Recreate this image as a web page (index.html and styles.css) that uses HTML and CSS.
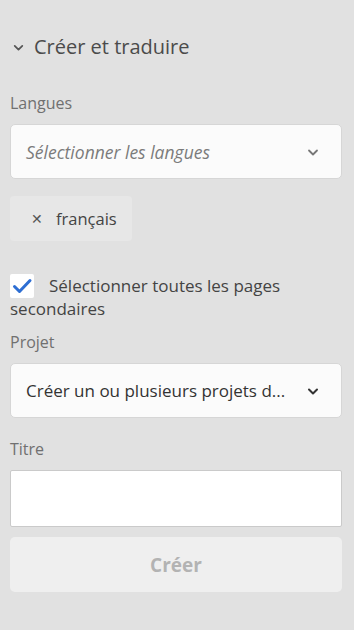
FILE: index.html
```html
<!DOCTYPE html>
<html lang="fr">

<head>
    <meta charset="UTF-8">
    <meta name="viewport" content="width=device-width, initial-scale=1.0">
    <title>Créer et traduire</title>
    <link rel="stylesheet" href="styles.css">
</head>

<body>
    <section class="panel">
        <h2 class="heading">
            <svg class="heading-icon" width="13" height="13" viewBox="0 0 12 12">
                <path d="M2.5 4.5 L6 8 L9.5 4.5" fill="none" stroke="#555" stroke-width="1.6" stroke-linecap="round" stroke-linejoin="round" />
            </svg>
            Créer et traduire
        </h2>

        <label class="label label-first">Langues</label>
        <div class="select">
            <span class="placeholder">Sélectionner les langues</span>
            <svg class="chevron" width="12" height="12" viewBox="0 0 12 12">
                <path d="M2 4.5 L6 8.5 L10 4.5" fill="none" stroke="#777" stroke-width="1.8" stroke-linecap="round" stroke-linejoin="round" />
            </svg>
        </div>

        <div class="tags">
            <span class="tag"><span class="tag-x">✕</span>français</span>
        </div>

        <div class="check">
            <span class="checkbox">
                <svg width="24" height="24" viewBox="0 0 24 24">
                    <path d="M4.5 12.5 L9.5 17.5 L20 6.5" fill="none" stroke="#2d6ed3" stroke-width="3" stroke-linecap="round" stroke-linejoin="round" />
                </svg>
            </span>Sélectionner toutes les pages secondaires
        </div>

        <label class="label label-project">Projet</label>
        <div class="select">
            <span class="value">Créer un ou plusieurs projets d...</span>
            <svg class="chevron" width="12" height="12" viewBox="0 0 12 12">
                <path d="M2 4.5 L6 8.5 L10 4.5" fill="none" stroke="#333" stroke-width="2" stroke-linecap="round" stroke-linejoin="round" />
            </svg>
        </div>

        <label class="label label-title">Titre</label>
        <input class="input" type="text">

        <button class="create" disabled>Créer</button>
    </section>
</body>

</html>
```

FILE: styles.css
```css
html,
body {
    margin: 0;
    background-color: #e1e1e1;
}

body {
    font-family: "Open Sans", "Noto Sans", sans-serif;
    color: #4b4b4b;
}

.panel {
    display: flex;
    flex-direction: column;
    padding: 35px 12px 0 10px;
}

.heading {
    display: flex;
    align-items: center;
    gap: 9px;
    margin: 0 0 0 2px;
    font-size: 20px;
    line-height: 24px;
    font-weight: normal;
    color: #4b4b4b;
}

.label {
    font-size: 16px;
    line-height: 20px;
    color: #707070;
    margin: 21px 0 11px;
}

.label-first {
    margin-top: 34px;
}

.label-project {
    margin-top: 12px;
}

.select {
    display: flex;
    align-items: center;
    justify-content: space-between;
    height: 55px;
    box-sizing: border-box;
    padding: 0 22px 0 15px;
    background-color: #fbfbfb;
    border: 1px solid #d6d6d6;
    border-radius: 5px;
    font-size: 17px;
}

.placeholder {
    font-style: italic;
    font-size: 17.5px;
    color: #7b7b7b;
}

.value {
    color: #333;
}

.tags {
    display: flex;
    margin-top: 17px;
}

.tag {
    display: flex;
    align-items: center;
    height: 45px;
    padding: 0 15px 0 21px;
    background-color: #e7e7e7;
    border-radius: 4px;
    font-size: 16.5px;
    color: #444;
}

.tag-x {
    font-size: 14px;
    margin-right: 13px;
    color: #555;
}

.check {
    margin-top: 33px;
    font-size: 17px;
    line-height: 22px;
    color: #444;
}

.checkbox {
    display: inline-block;
    width: 24px;
    height: 24px;
    margin-right: 15px;
    vertical-align: -6px;
    background-color: #fff;
    border-radius: 2px;
}

.input {
    height: 57px;
    box-sizing: border-box;
    background-color: #fff;
    border: 1px solid #cacaca;
    border-radius: 2px;
    margin: 0;
}

.create {
    height: 55px;
    margin-top: 10px;
    border: none;
    border-radius: 5px;
    background-color: #efefef;
    font-family: inherit;
    font-size: 19px;
    font-weight: bold;
    color: #b3b3b3;
}
```
